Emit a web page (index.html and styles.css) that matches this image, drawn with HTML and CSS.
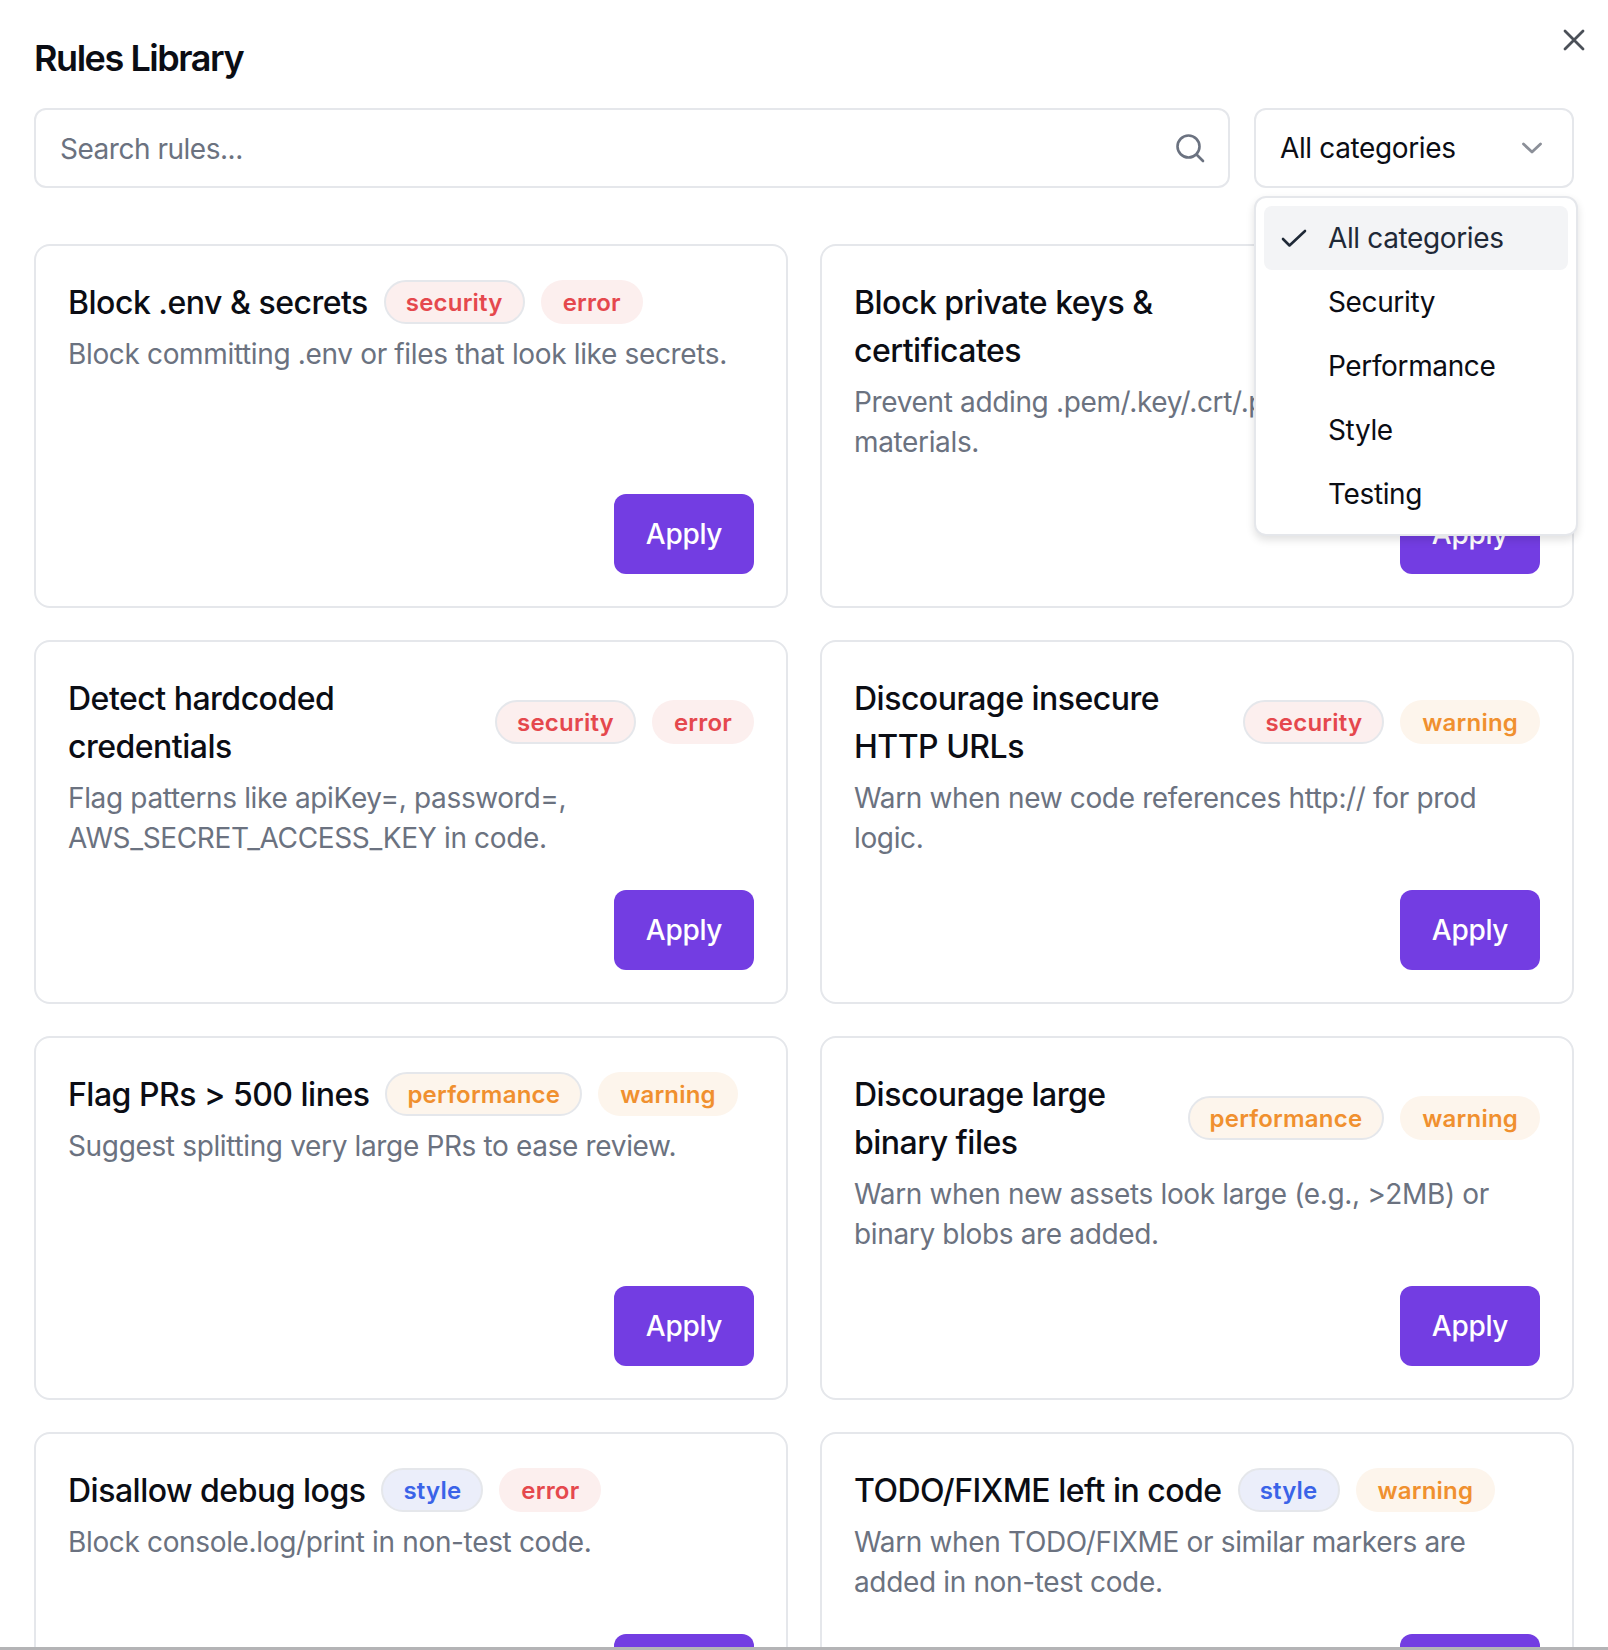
FILE: index.html

```html
<!DOCTYPE html>
<html lang="en">
<head>
  <meta charset="UTF-8">
  <title>Rules Library</title>
  <link rel="stylesheet" href="styles.css">
</head>
<body>
  <div class="modal">
    <button class="close-btn" aria-label="Close">
      <svg width="24" height="24" viewBox="0 0 24 24" fill="none" stroke="currentColor" stroke-width="2.8" stroke-linecap="round"><path d="M3 3l18 18M21 3L3 21"/></svg>
    </button>

    <h1 class="modal-title">Rules Library</h1>

    <div class="toolbar">
      <div class="search">
        <span class="search-text">Search rules...</span>
        <svg width="32" height="32" viewBox="0 0 32 32" fill="none" stroke="#6b7280" stroke-width="2.6" stroke-linecap="round"><circle cx="14.5" cy="14.5" r="11"/><path d="M23 23l6 6"/></svg>
      </div>
      <div class="select">
        <span>All categories</span>
        <svg width="24" height="24" viewBox="0 0 24 24" fill="none" stroke="#8b8f98" stroke-width="2.8" stroke-linecap="round" stroke-linejoin="round"><path d="M3.500 8l8.500 8 8.500-8"/></svg>
      </div>
    </div>

    <div class="menu">
      <div class="menu-item active">
        <svg class="check" width="28" height="28" viewBox="0 0 28 28" fill="none" stroke="#1f2937" stroke-width="2.6" stroke-linecap="round" stroke-linejoin="round"><path d="M3 15l6.500 6.500L25 7"/></svg>
        All categories
      </div>
      <div class="menu-item">Security</div>
      <div class="menu-item">Performance</div>
      <div class="menu-item">Style</div>
      <div class="menu-item">Testing</div>
    </div>

    <div class="rules-grid">
      <div class="rule-card">
        <div class="rule-head">
          <h3>Block .env &amp; secrets</h3>
          <span class="badge badge-red bordered">security</span>
          <span class="badge badge-red">error</span>
        </div>
        <p>Block committing .env or files that look like secrets.</p>
        <button class="btn">Apply</button>
      </div>

      <div class="rule-card">
        <div class="rule-head">
          <h3>Block private keys &amp; certificates</h3>
          <span class="badge badge-red bordered">security</span>
          <span class="badge badge-red">error</span>
        </div>
        <p>Prevent adding .pem/.key/.crt/.pfx or similar key materials.</p>
        <button class="btn">Apply</button>
      </div>

      <div class="rule-card">
        <div class="rule-head">
          <h3>Detect hardcoded credentials</h3>
          <span class="badge badge-red bordered">security</span>
          <span class="badge badge-red">error</span>
        </div>
        <p>Flag patterns like apiKey=, password=, AWS_SECRET_ACCESS_KEY in code.</p>
        <button class="btn">Apply</button>
      </div>

      <div class="rule-card">
        <div class="rule-head">
          <h3>Discourage insecure HTTP URLs</h3>
          <span class="badge badge-red bordered">security</span>
          <span class="badge badge-orange">warning</span>
        </div>
        <p>Warn when new code references http:// for prod logic.</p>
        <button class="btn">Apply</button>
      </div>

      <div class="rule-card">
        <div class="rule-head">
          <h3>Flag PRs &gt; 500 lines</h3>
          <span class="badge badge-orange bordered">performance</span>
          <span class="badge badge-orange">warning</span>
        </div>
        <p>Suggest splitting very large PRs to ease review.</p>
        <button class="btn">Apply</button>
      </div>

      <div class="rule-card">
        <div class="rule-head">
          <h3>Discourage large binary files</h3>
          <span class="badge badge-orange bordered">performance</span>
          <span class="badge badge-orange">warning</span>
        </div>
        <p>Warn when new assets look large (e.g., &gt;2MB) or binary blobs are added.</p>
        <button class="btn">Apply</button>
      </div>

      <div class="rule-card">
        <div class="rule-head">
          <h3>Disallow debug logs</h3>
          <span class="badge badge-blue bordered">style</span>
          <span class="badge badge-red">error</span>
        </div>
        <p>Block console.log/print in non-test code.</p>
        <button class="btn">Apply</button>
      </div>

      <div class="rule-card">
        <div class="rule-head">
          <h3>TODO/FIXME left in code</h3>
          <span class="badge badge-blue bordered">style</span>
          <span class="badge badge-orange">warning</span>
        </div>
        <p>Warn when TODO/FIXME or similar markers are added in non-test code.</p>
        <button class="btn">Apply</button>
      </div>
    </div>
  </div>
</body>
</html>
```

FILE: styles.css

```css
* {
  box-sizing: border-box;
}

html, body {
  margin: 0;
  height: 100%;
}

body {
  font-family: 'Inter', sans-serif;
  background: white;
  color: #0b0d14;
  overflow: hidden;
}

.modal {
  position: relative;
  height: 1650px;
  padding: 38px 34px 0;
  overflow: hidden;
  border-bottom: 3px solid #b4b4b6;
}

.modal-title {
  margin: 0 0 30px;
  font-size: 36px;
  line-height: 40px;
  font-weight: 600;
  letter-spacing: -1.45px;
}

.close-btn {
  position: absolute;
  top: 28px;
  right: 22px;
  padding: 0;
  border: none;
  background: none;
  color: #4b5058;
  display: flex;
}

/* search + select row */
.toolbar {
  display: flex;
  gap: 24px;
  margin-bottom: 56px;
}

.search, .select {
  height: 80px;
  display: flex;
  align-items: center;
  justify-content: space-between;
  border: 2px solid #e5e7eb;
  border-radius: 12px;
  font-size: 28px;
  letter-spacing: -0.37px;
}

.search {
  flex: 1;
  padding: 0 22px 0 24px;
  color: #6b7280;
}

.search-text {
  padding-top: 2px;
  letter-spacing: -0.48px;
}

.select {
  width: 320px;
  padding: 0 28px 0 24px;
}

/* dropdown */
.menu {
  position: absolute;
  top: 196px;
  left: 1254px;
  width: 324px;
  height: 340px;
  padding: 8px;
  background: white;
  border: 2px solid #e5e7eb;
  border-radius: 12px;
  box-shadow: 0 4px 8px rgba(0,0,0,0.12);
  z-index: 5;
  font-size: 28px;
  letter-spacing: -0.37px;
}

.menu-item {
  position: relative;
  height: 64px;
  line-height: 65px;
  padding-left: 64px;
  border-radius: 8px;
}

.menu-item.active {
  background: #f3f4f6;
  color: #1f2937;
}

.check {
  position: absolute;
  left: 16px;
  top: 18px;
}

/* cards */
.rules-grid {
  display: grid;
  grid-template-columns: 1fr 1fr;
  gap: 32px;
}

.rule-card {
  display: flex;
  flex-direction: column;
  padding: 32px;
  border: 2px solid #e5e7eb;
  border-radius: 16px;
}

.rule-head {
  display: flex;
  align-items: center;
  gap: 16px;
  margin-bottom: 8px;
}

.rule-head h3 {
  margin: 0 0 -1px;
  padding-top: 1px;
  font-size: 32px;
  line-height: 48px;
  font-weight: 500;
  letter-spacing: -0.5px;
}

.rule-card p {
  margin: 0 0 32px;
  font-size: 28px;
  line-height: 40px;
  color: #6b7280;
  letter-spacing: -0.35px;
}

.badge {
  flex-shrink: 0;
  height: 44px;
  line-height: 46px;
  padding: 0 22px;
  border-radius: 22px;
  font-size: 24px;
  font-weight: 600;
  letter-spacing: 0.2px;
}

.badge.bordered {
  line-height: 42px;
  padding: 0 20px;
  border: 2px solid #e5e7eb;
}

.badge-red {
  background: #fcefee;
  color: #e5484d;
}

.badge-orange {
  background: #fdf5ec;
  color: #f0902f;
}

.badge-blue {
  background: #ebeefa;
  color: #3a63e8;
}

.btn {
  align-self: flex-end;
  margin-top: auto;
  width: 140px;
  height: 80px;
  padding-top: 1px;
  border: none;
  border-radius: 12px;
  background: #733de2;
  color: white;
  font-family: inherit;
  font-size: 28px;
  font-weight: 500;
  letter-spacing: -0.3px;
}
```
